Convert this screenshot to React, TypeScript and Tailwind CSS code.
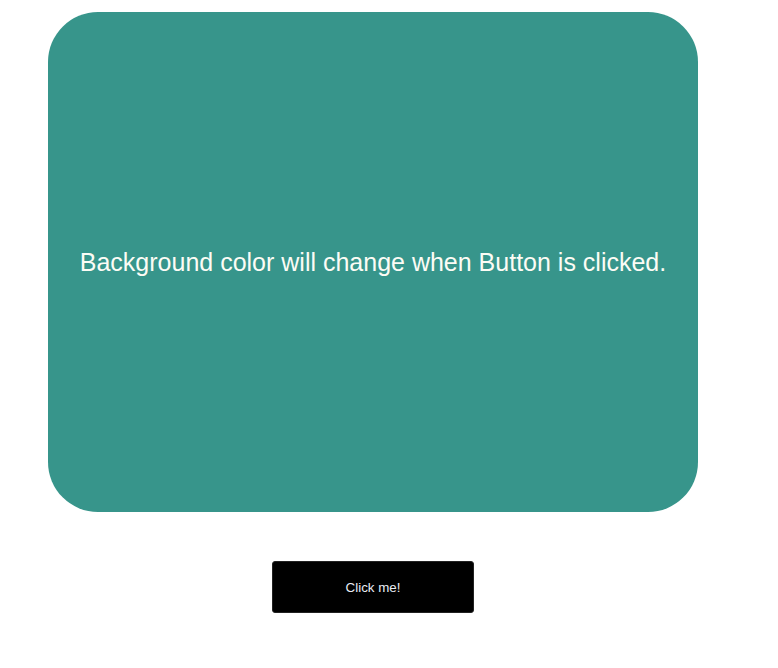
import { useState } from "react";

const COLORS = ["#37958b", "#8b4c95", "#c0673a", "#3a6cc0"];

export default function App() {
  const [idx, setIdx] = useState(0);

  return (
    <div className="min-h-screen bg-white font-['Liberation_Sans',Arial,sans-serif]">
      <div className="ml-12 pt-3 w-[650px] flex flex-col items-center">
        {/* Colour box */}
        <div
          className="w-[650px] h-[500px] rounded-[50px] flex items-center justify-center"
          style={{ backgroundColor: COLORS[idx] }}
        >
          <p className="text-[25px] text-[#fcfcf5] leading-none">
            Background color will change when Button is clicked.
          </p>
        </div>

        <button
          onClick={() => setIdx((idx + 1) % COLORS.length)}
          className="mt-[49px] w-[202px] h-[52px] pt-[2px] bg-black border border-[#222] rounded-[3px] text-[13.33px] text-[#e8ecf4]"
        >
          Click me!
        </button>
      </div>
    </div>
  );
}
